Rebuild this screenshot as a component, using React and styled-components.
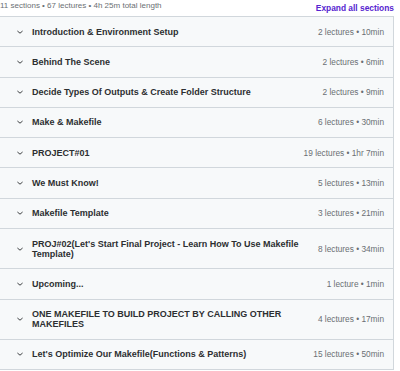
import styled, { createGlobalStyle } from "styled-components"

const GlobalStyle = createGlobalStyle`
*, *::before, *::after {
    box-sizing: border-box;
}
body {
    margin: 0;
    background: #fff;
    font-family: "Liberation Sans", Arial, sans-serif;
}
`

const sections = [
    { title: "Introduction & Environment Setup", meta: "2 lectures • 10min" },
    { title: "Behind The Scene", meta: "2 lectures • 6min" },
    { title: "Decide Types Of Outputs & Create Folder Structure", meta: "2 lectures • 9min" },
    { title: "Make & Makefile", meta: "6 lectures • 30min" },
    { title: "PROJECT#01", meta: "19 lectures • 1hr 7min" },
    { title: "We Must Know!", meta: "5 lectures • 13min" },
    { title: "Makefile Template", meta: "3 lectures • 21min" },
    { title: "PROJ#02(Let's Start Final Project - Learn How To Use Makefile Template)", meta: "8 lectures • 34min" },
    { title: "Upcoming...", meta: "1 lecture • 1min" },
    { title: "ONE MAKEFILE TO BUILD PROJECT BY CALLING OTHER MAKEFILES", meta: "4 lectures • 17min" },
    { title: "Let's Optimize Our Makefile(Functions & Patterns)", meta: "15 lectures • 50min" },
]

const Wrapper = styled.div`
width: 395px;
`

const Header = styled.div`
display: flex;
justify-content: space-between;
height: 16px;
line-height: 11px;
padding-right: 1px;
`

const Summary = styled.span`
font-size: 8px;
color: #6a6f73;
`

const Expand = styled.button`
border: none;
background: none;
padding: 0;
font-family: inherit;
font-size: 8.4px;
line-height: 11px;
font-weight: 700;
color: #5624d0;
cursor: pointer;
`

const Panel = styled.div`
margin-left: -1px;
width: 395px;
border: 1px solid #d1d7dc;
border-bottom: none;
`

const Row = styled.div`
display: flex;
align-items: center;
background: #f7f9fa;
border-bottom: 1px solid #d1d7dc;
padding: 9.65px 9px 9.65px 16px;
line-height: 10px;
`

const Chevron = styled.svg`
width: 8px;
height: 8px;
flex-shrink: 0;
margin-right: 8px;
`

const Title = styled.div`
flex: 1;
font-size: 9px;
line-height: 10px;
font-weight: 700;
color: #2d2f31;
padding-right: 14px;
`

const Meta = styled.div`
font-size: 8.3px;
color: #6a6f73;
white-space: nowrap;
`

export default function App() {
    return (
        <Wrapper>
            <GlobalStyle />
            <Header>
                <Summary>11 sections • 67 lectures • 4h 25m total length</Summary>
                <Expand>Expand all sections</Expand>
            </Header>
            <Panel>
                {sections.map((s, i) => (
                    <Row key={i}>
                        <Chevron viewBox="0 0 8 8">
                            <path d="M1.4 3 L4 5.2 L6.6 3" fill="none" stroke="#3e4143" strokeWidth="1" />
                        </Chevron>
                        <Title>{s.title}</Title>
                        <Meta>{s.meta}</Meta>
                    </Row>
                ))}
            </Panel>
        </Wrapper>
    )
}
